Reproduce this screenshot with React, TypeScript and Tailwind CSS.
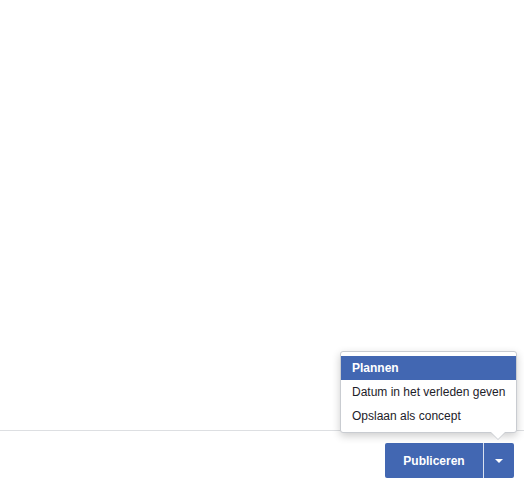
import { useState } from "react";

const items = ["Plannen", "Datum in het verleden geven", "Opslaan als concept"];

export default function App() {
  const [active, setActive] = useState(0);

  return (
    <div className="flex h-[486px] w-[524px] flex-col bg-white font-['Liberation_Sans',Arial,sans-serif] text-[12px] text-[#1d2129]">
      <div className="flex-1" />
      <div className="flex justify-end border-t border-[#dddfe2] pb-[8px] pr-[10px] pt-[12px]">
        <div className="relative">
          <div className="absolute bottom-[calc(100%+10px)] right-[-3px] w-[177px] rounded-[3px] border border-[#c9ccd1] bg-white py-[4px] shadow-[0_3px_8px_rgba(0,0,0,0.2)]">
            {items.map((label, i) => (
              <div
                key={label}
                onMouseEnter={() => setActive(i)}
                className={
                  i === active
                    ? "flex h-[24px] items-center whitespace-nowrap bg-[#4267b2] px-[11px] font-bold text-white"
                    : "flex h-[24px] items-center whitespace-nowrap px-[11px] text-[#1d2129]"
                }
              >
                {label}
              </div>
            ))}
            <div className="absolute right-[10px] top-full h-0 w-0 border-x-[8px] border-t-[8px] border-x-transparent border-t-[#c9ccd1]" />
            <div className="absolute right-[11px] top-full h-0 w-0 border-x-[7px] border-t-[7px] border-x-transparent border-t-white" />
          </div>
          <div className="flex h-[35px] overflow-hidden rounded-[2px] bg-[#4267b2] text-white">
            <button className="w-[98px] font-bold">Publiceren</button>
            <div className="w-px bg-white/80" />
            <button className="flex w-[30px] items-center justify-center">
              <span className="h-0 w-0 border-x-[4px] border-t-[4px] border-x-transparent border-t-white" />
            </button>
          </div>
        </div>
      </div>
    </div>
  );
}
